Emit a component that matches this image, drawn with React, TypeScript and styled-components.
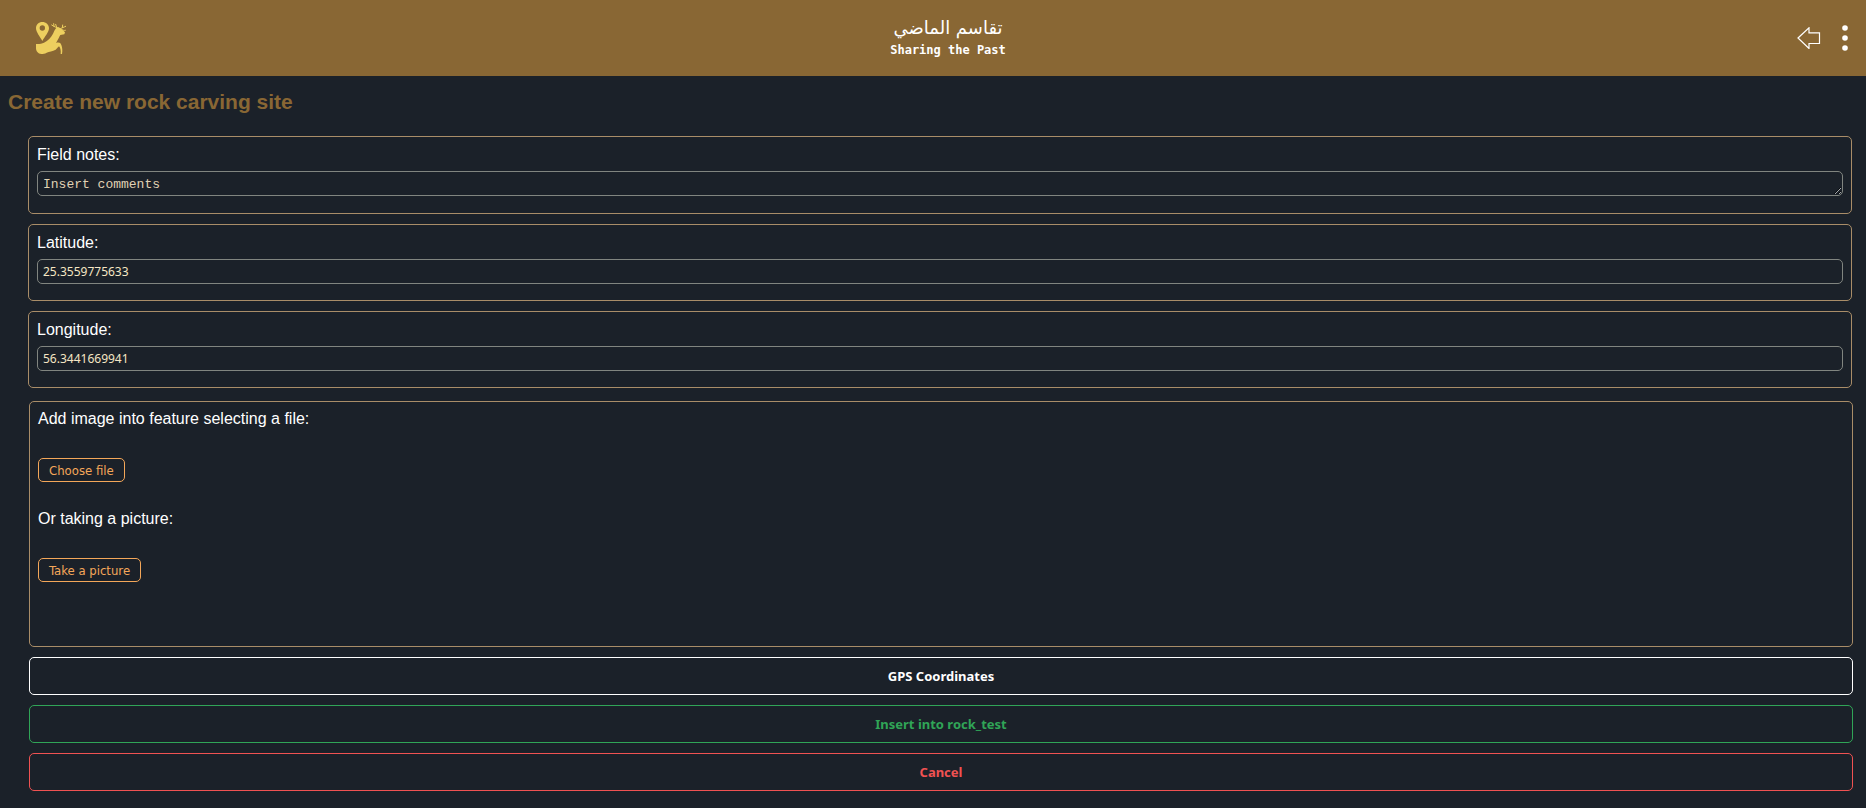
import React from "react";
import styled, { createGlobalStyle } from "styled-components";

const GlobalStyle = createGlobalStyle`
  *, *::before, *::after { box-sizing: border-box; }
  body {
    margin: 0;
    background: #1b2129;
    color: #fff;
    font-family: "Liberation Sans", Arial, sans-serif;
    font-size: 16px;
  }
`;

const buttonFont = `"DejaVu Sans Condensed", Tahoma, sans-serif`;
const uiFont = `"Noto Sans", Tahoma, sans-serif`;

const Header = styled.header`
  display: grid;
  grid-template-columns: 1fr auto 1fr;
  align-items: center;
  height: 76px;
  padding: 0 16px 0 36px;
  background: #896734;
`;

const HomeLink = styled.a`
  justify-self: start;
  display: flex;
`;

const Brand = styled.div`
  display: flex;
  flex-direction: column;
  align-items: center;
  padding-left: 10px;
`;

const ArabicName = styled.span`
  font-family: "DejaVu Sans", sans-serif;
  font-size: 18px;
  line-height: 24px;
`;

const EnglishName = styled.span`
  font-family: "DejaVu Sans Mono", monospace;
  font-weight: 700;
  font-size: 12px;
  line-height: 20px;
`;

const HeaderActions = styled.nav`
  justify-self: end;
  display: flex;
  align-items: center;
  gap: 19px;
`;

const IconButton = styled.button`
  display: flex;
  padding: 0;
  border: 0;
  background: none;
  color: #fff;
  cursor: pointer;
`;

const Title = styled.h1`
  margin: 0;
  padding: 14px 8px 0;
  color: #896734;
  font-size: 21px;
  line-height: 24px;
`;

const Form = styled.form`
  display: flex;
  flex-direction: column;
  gap: 10px;
  padding: 22px 13px 16px 29px;
`;

const Fields = styled.div`
  display: flex;
  flex-direction: column;
  gap: 10px;
  margin: 0 1px 3px -1px;
`;

const Card = styled.div<{ $multiline?: boolean }>`
  display: flex;
  flex-direction: column;
  align-items: stretch;
  gap: 7px;
  padding: 9px 8px ${(p) => (p.$multiline ? 17 : 16)}px;
  border: 1px solid #a98d68;
  border-radius: 5px;
`;

const Label = styled.label`
  line-height: 18px;
`;

const TextInput = styled.input`
  display: block;
  width: 100%;
  height: 25px;
  padding: 1px 5px;
  border: 1px solid #818580;
  border-radius: 5px;
  outline: 0;
  background: transparent;
  color: #f5e6c4;
  font-family: ${uiFont};
  font-size: 12px;
`;

const NotesInput = styled.textarea`
  display: block;
  width: 100%;
  height: 25px;
  padding: 5px;
  border: 1px solid #818580;
  border-radius: 5px;
  outline: 0;
  overflow: hidden;
  background: transparent;
  color: #f5e6c4;
  font-family: "Liberation Mono", "Courier New", monospace;
  font-size: 13px;
  line-height: 16px;

  &::placeholder { color: #e0d2b4; }
`;

const ImageCard = styled.section`
  display: flex;
  flex-direction: column;
  align-items: flex-start;
  gap: 28px;
  min-height: 246px;
  padding: 8px;
  border: 1px solid #a98d68;
  border-radius: 5px;
`;

const PickGroup = styled.div`
  display: flex;
  flex-direction: column;
  align-items: flex-start;
  gap: 30px;
`;

const Prompt = styled.p`
  margin: 0;
  line-height: 18px;
`;

const PickButton = styled.button`
  height: 24px;
  padding: 0 10px;
  border: 1px solid #f4a759;
  border-radius: 5px;
  background: transparent;
  color: #f4a759;
  font-family: ${buttonFont};
  font-size: 13px;
  cursor: pointer;
`;

const ActionButton = styled.button<{ $color: string }>`
  width: 100%;
  height: 38px;
  border: 1px solid ${(p) => p.$color};
  border-radius: 5px;
  background: transparent;
  color: ${(p) => p.$color};
  font-family: ${uiFont};
  font-size: 13px;
  font-weight: 700;
  cursor: pointer;
`;

function Logo() {
  return (
    <svg width="30" height="32" viewBox="0 0 90 96" fill="#edcf5f" aria-hidden="true">
      <path
        fillRule="evenodd"
        d="M19 0C8 0 0 8 0 19c0 12 12 25 19 38 7-13 20-26 20-38C39 8 30 0 19 0Zm0 10a8 8 0 1 1 0 16 8 8 0 0 1 0-16Z"
      />
      <path d="M0 66c9 1 17-1 24-4 12-6 21-16 27-27 3-6 5-11 9-16l5-3 6 1c4 3 10 7 16 14l-2 6-12 2c-3 5-6 12-10 19l-3 5c8-3 14-1 16 6 3 8 4 17 2 27h-4c1-9 0-17-5-23-3 2-6 7-10 10-9 5-20 6-27 9-6 3-10 4-16 4C6 96 0 87 0 79Z" />
      <path
        d="M68 18C61 17 54 14 47 9M54 13l-1-8M62 16l-3-9M72 21c6-4 11-5 17-8M79 17l1-8M77 22c4 3 7 4 11 3"
        fill="none"
        stroke="#edcf5f"
        strokeWidth="3"
        strokeLinecap="round"
      />
    </svg>
  );
}

function BackArrow() {
  return (
    <svg width="24" height="22" viewBox="0 0 24 22" fill="none" stroke="#fff" aria-hidden="true">
      <path d="M1 11 12 .8v5h10.5v10.7H12v5Z" strokeWidth="1.2" />
    </svg>
  );
}

function Dots() {
  return (
    <svg width="10" height="26" viewBox="0 0 10 26" fill="#fff" aria-hidden="true">
      <circle cx="5" cy="3" r="2.8" />
      <circle cx="5" cy="13" r="2.8" />
      <circle cx="5" cy="23" r="2.8" />
    </svg>
  );
}

export default function App() {
  return (
    <>
      <GlobalStyle />
      <Header>
        <HomeLink href="#" aria-label="Home">
          <Logo />
        </HomeLink>
        <Brand>
          <ArabicName lang="ar" dir="rtl">تقاسم الماضي</ArabicName>
          <EnglishName>Sharing the Past</EnglishName>
        </Brand>
        <HeaderActions>
          <IconButton type="button" aria-label="Back">
            <BackArrow />
          </IconButton>
          <IconButton type="button" aria-label="Menu">
            <Dots />
          </IconButton>
        </HeaderActions>
      </Header>
      <main>
        <Title>Create new rock carving site</Title>
        <Form onSubmit={(e) => e.preventDefault()}>
          <Fields>
            <Card $multiline>
              <Label htmlFor="notes">Field notes:</Label>
              <NotesInput id="notes" rows={1} placeholder="Insert comments" />
            </Card>
            <Card>
              <Label htmlFor="lat">Latitude:</Label>
              <TextInput id="lat" type="text" defaultValue="25.3559775633" />
            </Card>
            <Card>
              <Label htmlFor="lng">Longitude:</Label>
              <TextInput id="lng" type="text" defaultValue="56.3441669941" />
            </Card>
          </Fields>
          <ImageCard>
            <PickGroup>
              <Prompt>Add image into feature selecting a file:</Prompt>
              <PickButton type="button">Choose file</PickButton>
            </PickGroup>
            <PickGroup>
              <Prompt>Or taking a picture:</Prompt>
              <PickButton type="button">Take a picture</PickButton>
            </PickGroup>
          </ImageCard>
          <ActionButton type="button" $color="#ffffff">GPS Coordinates</ActionButton>
          <ActionButton type="submit" $color="#30a557">Insert into rock_test</ActionButton>
          <ActionButton type="button" $color="#f05252">Cancel</ActionButton>
        </Form>
      </main>
    </>
  );
}
